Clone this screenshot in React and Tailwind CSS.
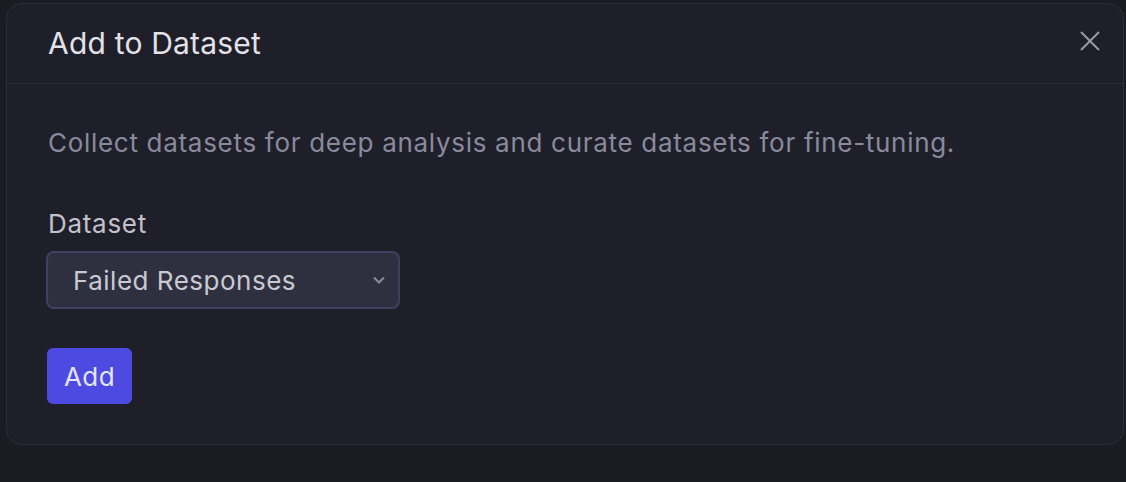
import React, { useState } from 'react';

const App = () => {
  const [dataset, setDataset] = useState('failed');

  return (
    <div
      className="w-[1126px] h-[482px] bg-[#1b1b24] pt-[3px] pl-[6px] pr-[2px] overflow-hidden"
      style={{ fontFamily: 'Inter, "Noto Sans", sans-serif' }}
    >
      <div className="bg-[#1f1f2a] border border-[#2e2e3a] rounded-2xl h-[442px] flex flex-col">
        {/* header */}
        <div className="flex items-center justify-between h-[80px] pl-[41px] pr-[22px] border-b border-[#2c2c38]">
          <h2 className="text-[30px] text-[#e2e2e8] tracking-[0.2px]">Add to Dataset</h2>
          <button className="text-[#9a9aa6] mt-[-6px]" aria-label="Close">
            <svg width="22" height="22" viewBox="0 0 22 22" fill="none" stroke="currentColor" strokeWidth="2">
              <path d="M2 2L20 20M20 2L2 20" />
            </svg>
          </button>
        </div>

        {/* body */}
        <div className="pl-[41px] pt-[44px] flex flex-col">
          <p className="text-[26px] text-[#8a8a9c] leading-[30px] tracking-[0.7px]">
            Collect datasets for deep analysis and curate datasets for fine-tuning.
          </p>

          <label className="mt-[51px] text-[26px] text-[#c2c2ca] leading-[30px] tracking-[0.7px]">Dataset</label>
          <div className="relative mt-[12px] -ml-[2px] w-[354px] h-[58px]">
            <select
              value={dataset}
              onChange={(e) => setDataset(e.target.value)}
              className="appearance-none w-full h-full bg-[#2f303f] border-2 border-[#3f4062] rounded-lg pl-[25px] text-[26px] tracking-[0.5px] text-[#c9c9d2] outline-none"
            >
              <option value="failed">Failed Responses</option>
            </select>
            <div className="pointer-events-none absolute inset-y-0 right-[15px] flex items-center text-[#8a8a9c]">
              <svg width="12" height="8" viewBox="0 0 12 8" fill="none" stroke="currentColor" strokeWidth="2">
                <path d="M1 1.5L6 6.5L11 1.5" />
              </svg>
            </div>
          </div>

          <button className="mt-[39px] -ml-[1px] w-[85px] h-[56px] bg-[#4c4ae0] rounded-md text-[26px] tracking-[0.4px] text-[#e4e4f4]">
            Add
          </button>
        </div>
      </div>
    </div>
  );
};

export default App;
